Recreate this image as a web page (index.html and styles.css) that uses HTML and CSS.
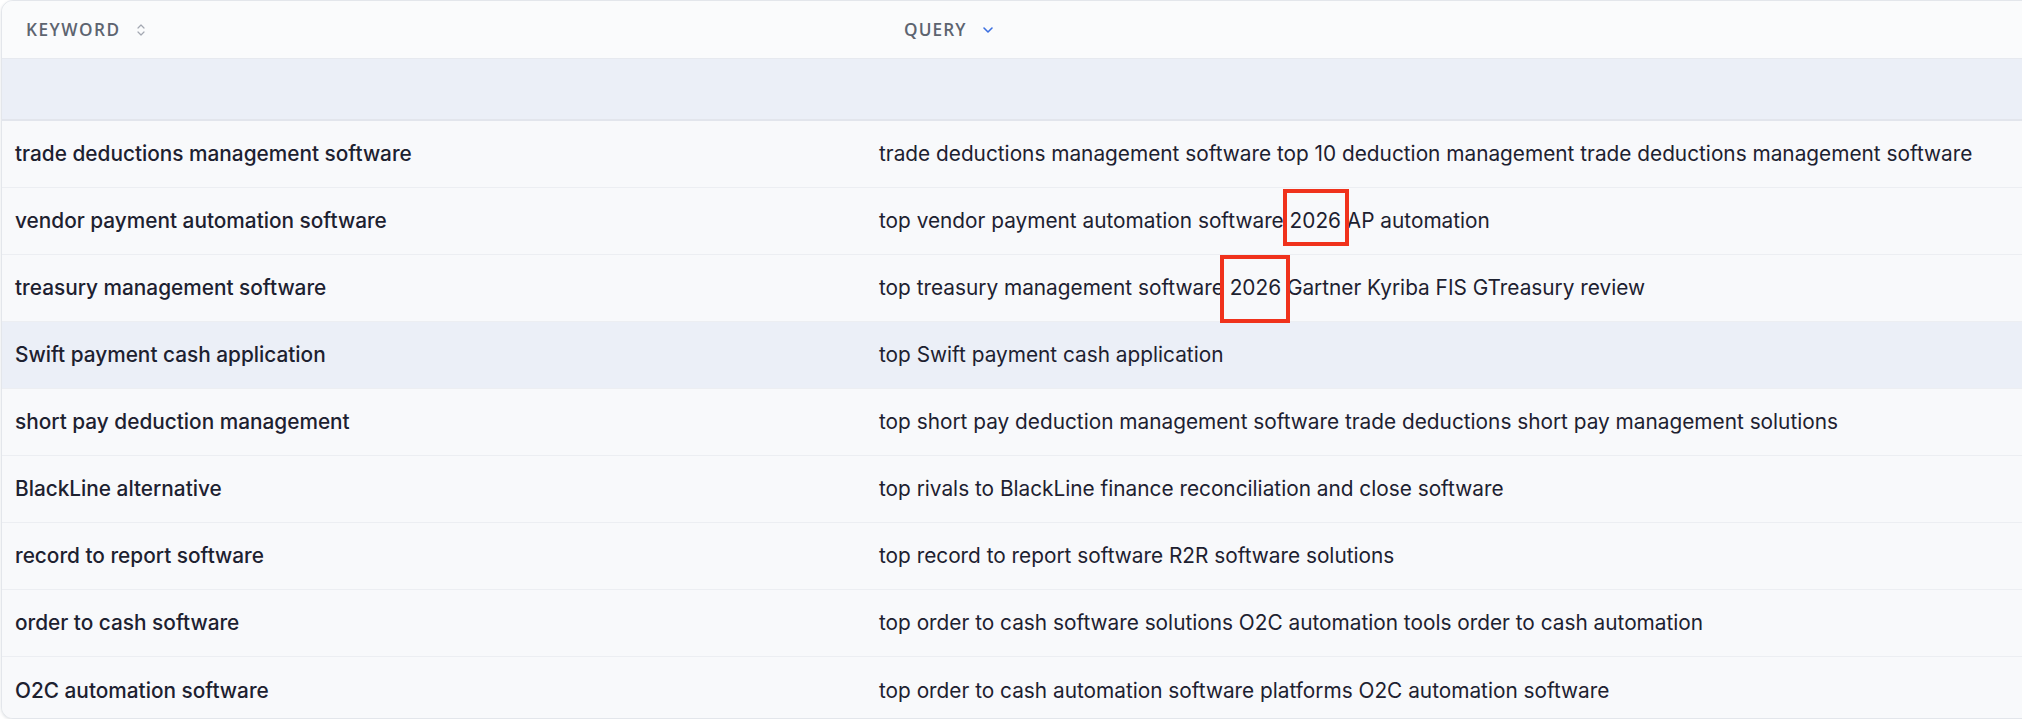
FILE: index.html
```html
<!DOCTYPE html>
<html>
<head>
<meta charset="utf-8">
<link rel="stylesheet" href="styles.css">
</head>
<body>
<div class="card">
  <div class="thead">
    <div class="th th-keyword">
      <span>Keyword</span>
      <svg class="sort-icon" width="10" height="16" viewBox="0 0 10 16"><path d="M2 6 L5 3 L8 6" fill="none" stroke="#a3a8b2" stroke-width="1.2" stroke-linecap="round" stroke-linejoin="round"/><path d="M2 10 L5 13 L8 10" fill="none" stroke="#a3a8b2" stroke-width="1.2" stroke-linecap="round" stroke-linejoin="round"/></svg>
    </div>
    <div class="th th-query">
      <span>Query</span>
      <svg class="sort-icon" width="12" height="8" viewBox="0 0 12 8"><path d="M2 2 L6 6 L10 2" fill="none" stroke="#3b6fe0" stroke-width="1.6" stroke-linecap="round" stroke-linejoin="round"/></svg>
    </div>
  </div>
  <div class="empty-row"></div>
  <div class="tbody">
    <div class="row"><div class="td td-key"><span>trade deductions management software</span></div><div class="td td-query"><span>trade deductions management software top 10 deduction management trade deductions management software</span></div></div>
    <div class="row"><div class="td td-key"><span>vendor payment automation software</span></div><div class="td td-query"><span>top vendor payment automation software <span class="mark mark-a">2026</span> AP automation</span></div></div>
    <div class="row"><div class="td td-key"><span>treasury management software</span></div><div class="td td-query"><span>top treasury management software <span class="mark mark-b">2026</span> Gartner Kyriba FIS GTreasury review</span></div></div>
    <div class="row row-hover"><div class="td td-key"><span>Swift payment cash application</span></div><div class="td td-query"><span>top Swift payment cash application</span></div></div>
    <div class="row"><div class="td td-key"><span>short pay deduction management</span></div><div class="td td-query"><span>top short pay deduction management software trade deductions short pay management solutions</span></div></div>
    <div class="row"><div class="td td-key"><span>BlackLine alternative</span></div><div class="td td-query"><span>top rivals to BlackLine finance reconciliation and close software</span></div></div>
    <div class="row"><div class="td td-key"><span>record to report software</span></div><div class="td td-query"><span>top record to report software R2R software solutions</span></div></div>
    <div class="row"><div class="td td-key"><span>order to cash software</span></div><div class="td td-query"><span>top order to cash software solutions O2C automation tools order to cash automation</span></div></div>
    <div class="row row-last"><div class="td td-key"><span>O2C automation software</span></div><div class="td td-query"><span>top order to cash automation software platforms O2C automation software</span></div></div>
  </div>
</div>
</body>
</html>
```

FILE: styles.css
```css
html, body {
  margin: 0;
  padding: 0;
  background: #ffffff;
}

body {
  padding-left: 1px;
  overflow: hidden;
}

.card {
  width: 2060px;
  background: #f8f9fb;
  border: 1px solid #e3e6eb;
  border-radius: 12px;
  box-shadow: 0 1px 3px rgba(20, 30, 50, 0.12);
  overflow: hidden;
  height: 719px;
  box-sizing: border-box;
}

.thead {
  display: grid;
  grid-template-columns: 877px 1fr;
  height: 57px;
  background: #fafbfc;
  border-bottom: 1px solid #e6e9ef;
}

.th {
  display: flex;
  align-items: center;
  gap: 14px;
  padding-left: 25px;
  font-family: "Open Sans", "Noto Sans", sans-serif;
  font-weight: 600;
  font-size: 17.2px;
  letter-spacing: 1.1px;
  text-transform: uppercase;
  color: #5d6470;
}

.th-keyword {
  padding-left: 24px;
  letter-spacing: 1.5px;
  gap: 15px;
}

.th-query {
  gap: 15px;
}

.sort-icon {
  display: block;
}

.empty-row {
  height: 60px;
  background: #ebeff7;
  border-bottom: 2px solid #e2e5ec;
}

.row {
  display: grid;
  grid-template-columns: 864px 1fr;
  height: 67px;
  border-bottom: 1px solid #eceef2;
  box-sizing: border-box;
  background: #f8f9fb;
}

.row-hover {
  background: #ebeff7;
}

.row-last {
  border-bottom: none;
}

.td {
  display: flex;
  align-items: center;
  padding-left: 13px;
  font-family: "Inter", "Lato", sans-serif;
  color: #1d2130;
  white-space: pre;
  line-height: 26px;
}

.td-key {
  font-size: 20.8px;
  font-weight: 500;
}

.td-query {
  font-size: 20.8px;
  font-weight: 400;
}

.mark {
  position: relative;
}

.mark::after {
  content: "";
  position: absolute;
  border: 4px solid #f0321c;
  box-sizing: border-box;
}

.mark-a::after {
  left: -7px;
  right: -8px;
  top: -19px;
  bottom: -13px;
}

.mark-b::after {
  left: -10px;
  right: -9px;
  top: -20px;
  bottom: -23px;
}
```
